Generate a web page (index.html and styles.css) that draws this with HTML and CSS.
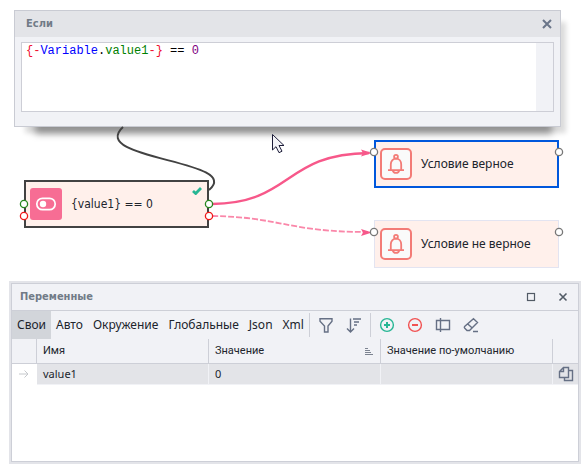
FILE: index.html
```html
<!DOCTYPE html>
<html lang="ru">
<head>
<meta charset="utf-8">
<title>Если</title>
<link rel="stylesheet" href="styles.css">
</head>
<body>
<main class="canvas">
  <section class="popup" aria-labelledby="popup-title">
    <header class="popup-head">
      <h2 id="popup-title">Если</h2>
      <button class="icon-btn" aria-label="Закрыть"><svg width="10" height="10" viewBox="0 0 10 10"><path d="M1 1l8 8M9 1L1 9" stroke="#6a7589" stroke-width="2"/></svg></button>
    </header>
    <div class="editor">
      <div class="code" role="textbox" aria-multiline="true" aria-labelledby="popup-title" contenteditable="true" spellcheck="false"><span class="brace">{-</span><span class="object">Variable</span>.<span class="field">value1</span><span class="brace">-}</span> == <span class="number">0</span></div>
      <div class="track"></div>
    </div>
  </section>

  <article class="node node-if">
    <svg class="node-icon" viewBox="0 0 32 32"><rect width="32" height="32" rx="3" fill="#f76d94"/><rect x="6.8" y="10.300" width="18.400" height="11.400" rx="5.700" fill="none" stroke="#fff" stroke-width="1.700"/><circle cx="13" cy="16" r="3.200" fill="#fff"/></svg>
    <span>{value1} == 0</span>
    <svg class="check" width="10" height="8" viewBox="0 0 10 8"><path d="M1 4l2.700 2.500L9 1" fill="none" stroke="#27b694" stroke-width="2.800"/></svg>
  </article>
  <article class="node node-true">
    <svg class="node-icon" viewBox="0 0 32 32"><use href="#bell"/></svg>
    <span>Условие верное</span>
  </article>
  <article class="node node-false">
    <svg class="node-icon" viewBox="0 0 32 32"><use href="#bell"/></svg>
    <span>Условие не верное</span>
  </article>

  <svg class="links" width="588" height="280" viewBox="0 0 588 280" aria-hidden="true">
    <defs>
      <g id="bell">
        <rect x="1" y="1" width="30" height="30" rx="4" fill="#fafafa" stroke="#f37b76" stroke-width="2"/>
        <g fill="none" stroke="#f37b76" stroke-width="1.800">
          <circle cx="16" cy="8.700" r="1.900"/>
          <path d="M8 22.100h16M10.800 22V16.500c0-3.300 2-5.800 5.200-5.800s5.200 2.500 5.200 5.800V22M12.800 22.500c.6 3.200 5.800 3.200 6.400 0"/>
        </g>
      </g>
    </defs>
    <path d="M123 127C87 160 244 160 209 190" fill="none" stroke="#424242" stroke-width="2"/>
    <path d="M212 204C293 203 283 154 369 153" fill="none" stroke="#f7588a" stroke-width="2.400"/>
    <path d="M212 216C280 217 288 232 368 232" fill="none" stroke="#fa87a9" stroke-width="1.800" stroke-dasharray="6 2"/>
    <path d="M361 149.500l11 3.500-11 3.500 2-3.500zM361 229l11 3.500-11 3.500 2-3.500z" fill="#f7588a"/>
    <g fill="#fff" stroke-width="1.300">
      <g stroke="#27871f"><circle cx="24" cy="204" r="3.600"/><circle cx="209" cy="204" r="3.600"/></g>
      <g stroke="#f01818"><circle cx="24" cy="216" r="3.600"/><circle cx="209" cy="216" r="3.600"/></g>
      <g stroke="#777"><circle cx="374" cy="152" r="3.600"/><circle cx="559" cy="152" r="3.600"/><circle cx="374" cy="232" r="3.600"/><circle cx="559" cy="232" r="3.600"/></g>
    </g>
    <path d="M272.500 134.500v15.500l3.500-3.300 3 6 3-1.500-3-5.700h5z" fill="#f4f4f8" stroke="#1c1c38"/>
  </svg>
</main>

<section class="panel" aria-labelledby="panel-title">
  <header class="panel-head">
    <h2 id="panel-title">Переменные</h2>
    <button class="icon-btn" aria-label="Развернуть"><svg width="10" height="10" viewBox="0 0 10 10"><rect x="1.500" y="1.500" width="7" height="7" fill="none" stroke="#525b66" stroke-width="1.200"/></svg></button>
    <button class="icon-btn" aria-label="Закрыть"><svg width="10" height="10" viewBox="0 0 10 10"><path d="M1.500 1.500l7 7M8.500 1.500l-7 7" stroke="#525b66" stroke-width="1.600"/></svg></button>
  </header>
  <div class="toolbar">
    <button class="tab active">Свои</button>
    <button class="tab">Авто</button>
    <button class="tab">Окружение</button>
    <button class="tab">Глобальные</button>
    <button class="tab">Json</button>
    <button class="tab">Xml</button>
    <div class="tools">
      <button class="icon-btn" aria-label="Фильтр"><svg width="16" height="16" viewBox="0 0 16 16"><path d="M2 1.800h12v2.400L10 9v6H6.500V9L2 4.200z"/></svg></button>
      <button class="icon-btn" aria-label="Сортировка"><svg width="16" height="16" viewBox="0 0 16 16"><path d="M4.500 1.500V15M1 11.500L4.500 15 8 11.500M7 2h8M8 5h5M8 8h3"/></svg></button>
    </div>
    <div class="tools">
      <button class="icon-btn add" aria-label="Добавить"><svg width="16" height="16" viewBox="0 0 16 16"><circle cx="8" cy="8" r="6.400"/><path d="M8 5v6M5 8h6" stroke-width="2"/></svg></button>
      <button class="icon-btn remove" aria-label="Удалить"><svg width="16" height="16" viewBox="0 0 16 16"><circle cx="8" cy="8" r="6.400"/><path d="M5 8h6" stroke-width="2"/></svg></button>
      <button class="icon-btn" aria-label="Переименовать"><svg width="16" height="16" viewBox="0 0 16 16"><path d="M1.500 3.500h13v9h-13zM5.500 1v14"/></svg></button>
      <button class="icon-btn" aria-label="Очистить"><svg width="16" height="16" viewBox="0 0 16 16"><path d="M10.500 1.700l4 3.800-8 8H4L1.600 11c-.4-.5-.4-1 0-1.500zM4.500 6.800l5 4.500M10 14.500h5"/></svg></button>
    </div>
  </div>
  <table>
    <colgroup><col class="narrow"><col><col><col><col class="narrow"></colgroup>
    <thead>
      <tr><th></th><th scope="col">Имя</th><th scope="col"><div class="sorted">Значение<svg width="10" height="9" viewBox="0 0 10 9"><path d="M1 1.500h3M1 3.500h5M1 5.500h6M1 7.500h8" stroke="#7c8390"/></svg></div></th><th scope="col">Значение по-умолчанию</th><th></th></tr>
    </thead>
    <tbody>
      <tr>
        <td class="marker"><svg width="10" height="8" viewBox="0 0 10 8"><path d="M0 4h9M5.500 .5L9 4 5.500 7.500" fill="none" stroke="#c5c8cc"/></svg></td>
        <td>value1</td><td>0</td><td></td>
        <td class="copy"><button class="icon-btn" aria-label="Копировать"><svg width="16" height="16" viewBox="0 0 16 16"><path d="M5.500 1.500h5v10h-9v-6zM5.500 1.500v4h-4M10.500 4.500h4v10h-8v-3"/></svg></button></td>
      </tr>
    </tbody>
  </table>
</section>
</body>
</html>
```
FILE: styles.css
```css
* {
  box-sizing: border-box;
}

body {
  margin: 0;
  background: #fff;
  color: #20242c;
  font: 12px/16px "Noto Sans", sans-serif;
}

h2 {
  flex: 1;
  margin: 0;
  color: #717b87;
  font: bold 11px/16px "DejaVu Sans Condensed", "DejaVu Sans", sans-serif;
}

button {
  padding: 0;
  border: 0;
  background: none;
  color: inherit;
  font: inherit;
}

.icon-btn {
  display: flex;
}

.canvas {
  position: relative;
  padding: 10px 27px 1px 14px;
  min-height: 281px;
}

.popup {
  border: 1px solid #c9cbd3;
  background: #f1f2f6;
  box-shadow: 6px 22px 7px -15px rgba(0, 0, 0, 0.34), 8px 9px 5px -3px rgba(0, 0, 0, 0.14);
}

.popup-head {
  display: flex;
  align-items: center;
  height: 26px;
  padding: 0 8px 0 11px;
  background: #e3e4e8;
}

.editor {
  display: flex;
  min-height: 70px;
  margin: 5px 6px 14px;
  border: 1px solid #cdced6;
  background: #fff;
}

.code {
  flex: 1;
  padding: 0 4px;
  color: #000;
  font: 12px/16px "Liberation Mono", monospace;
  white-space: pre-wrap;
  outline: 0;
}

.track {
  width: 17px;
  background: #f1f2f6;
}

.brace {
  color: #f01030;
}

.object {
  color: #00f;
}

.field {
  color: #008000;
}

.number {
  color: #800080;
}

.links {
  position: absolute;
  top: 0;
  left: 0;
}

.node {
  position: absolute;
  display: flex;
  align-items: center;
  gap: 9px;
  width: 185px;
  height: 48px;
  padding: 0 4px;
  border: 2px solid #424242;
  background: #fff0eb;
}

.node-if {
  left: 24px;
  top: 180px;
  font-family: "DejaVu Sans Condensed", "DejaVu Sans", sans-serif;
}

.node-true {
  left: 374px;
  top: 140px;
  border-color: #0057dc;
}

.node-false {
  left: 374px;
  top: 220px;
  padding: 0 5px;
  border: 1px solid #e3e4f1;
}

.node-icon {
  width: 32px;
  height: 32px;
}

.check {
  position: absolute;
  top: 5px;
  right: 5px;
}

.panel {
  min-height: 183px;
  margin: 0 7px 8px 9px;
  border: 2px solid #e3e4e9;
  outline: 1px solid #cdcfd7;
  outline-offset: -3px;
  padding: 1px;
}

.panel-head {
  display: flex;
  align-items: center;
  gap: 22px;
  height: 27px;
  padding: 0 10px 0 8px;
  border-bottom: 1px solid #cdcfd7;
  background: #f1f2f6;
}

.toolbar {
  display: flex;
  height: 28px;
  background: #f1f2f6;
}

.tab {
  padding: 0 5px;
}

.tab.active {
  background: #d2d5da;
}

.tools {
  display: flex;
  align-items: center;
  gap: 12px;
  height: 24px;
  margin-top: 2px;
  padding: 0 8px;
  border-left: 1px solid #cdcfd7;
}

.toolbar svg,
.copy svg {
  fill: none;
  stroke: #667085;
  stroke-width: 1.4px;
}

.toolbar .add svg {
  stroke: #27b694;
}

.toolbar .remove svg {
  stroke: #f15252;
}

table {
  width: 100%;
  border-collapse: separate;
  border-spacing: 0;
  table-layout: fixed;
  font-size: 11px;
}

.narrow {
  width: 25px;
}

th,
td {
  padding: 0 6px;
  border-right: 1px solid #cdcfd7;
  text-align: left;
  font-weight: normal;
}

th:last-child,
td:last-child {
  border-right: 0;
}

th {
  height: 25px;
  border-bottom: 1px solid #cdcfd7;
  background: #f1f2f6;
  font-family: Roboto, sans-serif;
}

td {
  height: 21px;
  border-color: #f1f2f6;
  border-bottom: 1px solid #f1f2f6;
  background: #e3e4e8;
}

td.marker {
  padding: 0 7px;
  border-color: #fff;
  background: #fff;
}

.marker svg {
  display: block;
}

.copy {
  padding: 0 5px;
}

.sorted {
  display: flex;
  align-items: center;
  justify-content: space-between;
}
```
